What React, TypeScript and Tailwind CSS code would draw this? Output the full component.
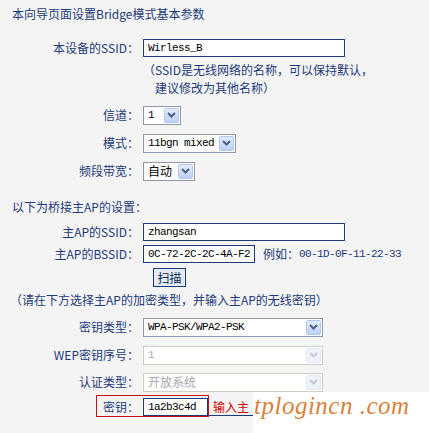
import React from 'react';

const mono = "font-['Liberation_Mono','Noto_Sans_CJK_SC',monospace] text-[11px] tracking-[-0.6px]";

function Label({ children }: { children: React.ReactNode }) {
  return <div className="w-[139px] shrink-0 text-right leading-[18px]">{children}</div>;
}

function Row({ label, children, className = '' }: { label: string; children: React.ReactNode; className?: string }) {
  return (
    <div className={`flex h-[18px] items-center gap-[4px] ${className}`}>
      <Label>{label}</Label>
      {children}
    </div>
  );
}

function TextInput({ value, width }: { value: string; width: string }) {
  return (
    <div className={`flex h-[18px] items-center border border-[#1c3a78] bg-white pl-[4px] text-black ${width} ${mono}`}>
      {value}
    </div>
  );
}

function Arrow({ disabled }: { disabled?: boolean }) {
  return (
    <div
      className={`m-[1px] flex w-[15px] shrink-0 items-center justify-center rounded-[2px] border ${
        disabled ? 'border-[#e3e8f3] bg-[#eef2fa]' : 'border-[#b2c6f3] bg-gradient-to-b from-[#e4ecfd] to-[#bcd0f8]'
      }`}
    >
      <svg width="9" height="6" viewBox="0 0 9 6">
        <path d="M1 1 L4.5 4.5 L8 1" fill="none" stroke={disabled ? '#c3cad8' : '#4d5f82'} strokeWidth="2" />
      </svg>
    </div>
  );
}

function Select({ value, width, disabled }: { value: string; width: string; disabled?: boolean }) {
  return (
    <div
      className={`flex h-[19px] items-stretch border bg-white ${width} ${
        disabled ? 'border-[#cfcdc2] text-[#a8a8a8]' : 'border-[#8e9aab] text-black'
      }`}
    >
      <div className={`flex flex-1 items-center overflow-hidden whitespace-nowrap pl-[4px] ${/[a-z0-9]/i.test(value) ? mono : 'text-[12px]'}`}>
        {value}
      </div>
      <Arrow disabled={disabled} />
    </div>
  );
}

export default function App() {
  return (
    <div className="relative h-[433px] w-[429px] overflow-hidden bg-[#f4f4f4] font-['Noto_Sans_CJK_SC',sans-serif] text-[12px] text-[#1c3a7a]">
      <div className="flex flex-col">
        <div className="mt-[6px] pl-[12px] leading-[16px]">本向导页面设置Bridge模式基本参数</div>

        <Row label="本设备的SSID：" className="mt-[17px]">
          <TextInput value="Wirless_B" width="w-[202px]" />
        </Row>
        <div className="mt-[4px] pl-[143px] leading-[18px]">（SSID是无线网络的名称，可以保持默认，</div>
        <div className="pl-[155px] leading-[18px]">建议修改为其他名称）</div>

        <Row label="信道：" className="mt-[9px]">
          <Select value="1" width="w-[38px]" />
        </Row>
        <Row label="模式：" className="mt-[10px]">
          <Select value="11bgn mixed" width="w-[93px]" />
        </Row>
        <Row label="频段带宽：" className="mt-[10px]">
          <Select value="自动" width="w-[52px]" />
        </Row>

        <div className="mt-[19px] pl-[12px] leading-[16px]">以下为桥接主AP的设置：</div>

        <Row label="主AP的SSID：" className="mt-[8px]">
          <TextInput value="zhangsan" width="w-[202px]" />
        </Row>
        <Row label="主AP的BSSID：" className="mt-[4px]">
          <TextInput value="0C-72-2C-2C-4A-F2" width="w-[112px]" />
          <div className="ml-[4px] flex items-center whitespace-nowrap">
            <span>例如：</span>
            <span className={mono}>00-1D-0F-11-22-33</span>
          </div>
        </Row>
        <div className="mt-[5px] pl-[153px]">
          <button className="flex h-[19px] w-[33px] items-center justify-center border border-[#1c3a78] bg-[#e3ebf8] text-[12px] leading-none text-[#0b1f4a]">
            扫描
          </button>
        </div>

        <div className="mt-[5px] pl-[10px] leading-[16px]">（请在下方选择主AP的加密类型，并输入主AP的无线密钥）</div>

        <Row label="密钥类型：" className="mt-[10px]">
          <Select value="WPA-PSK/WPA2-PSK" width="w-[180px]" />
        </Row>
        <Row label="WEP密钥序号：" className="mt-[10px]">
          <Select value="1" width="w-[180px]" disabled />
        </Row>
        <Row label="认证类型：" className="mt-[9px]">
          <Select value="开放系统" width="w-[180px]" disabled />
        </Row>

        <div className="relative mt-[7px] flex h-[18px] items-center">
          <Label>密钥：</Label>
          <div className="ml-[4px]">
            <TextInput value="1a2b3c4d" width="w-[65px]" />
          </div>
          <div className="flex h-[18px] w-[45px] items-center whitespace-nowrap border-b border-[#1c3a78] pl-[5px] text-[#d00000]">
            输入主
          </div>
          {/* red annotation box */}
          <div className="pointer-events-none absolute left-[96px] top-[-3px] h-[22px] w-[113px] border border-[#c8101a]" />
        </div>
      </div>

      {/* watermark */}
      <div className="absolute bottom-0 left-[253px] right-0 top-[392px] whitespace-nowrap bg-white pl-[1px] font-['Liberation_Serif',serif] text-[25px] italic leading-[28px] tracking-[0.5px] text-[#d9823c]">
        tplogincn .com
      </div>
    </div>
  );
}
